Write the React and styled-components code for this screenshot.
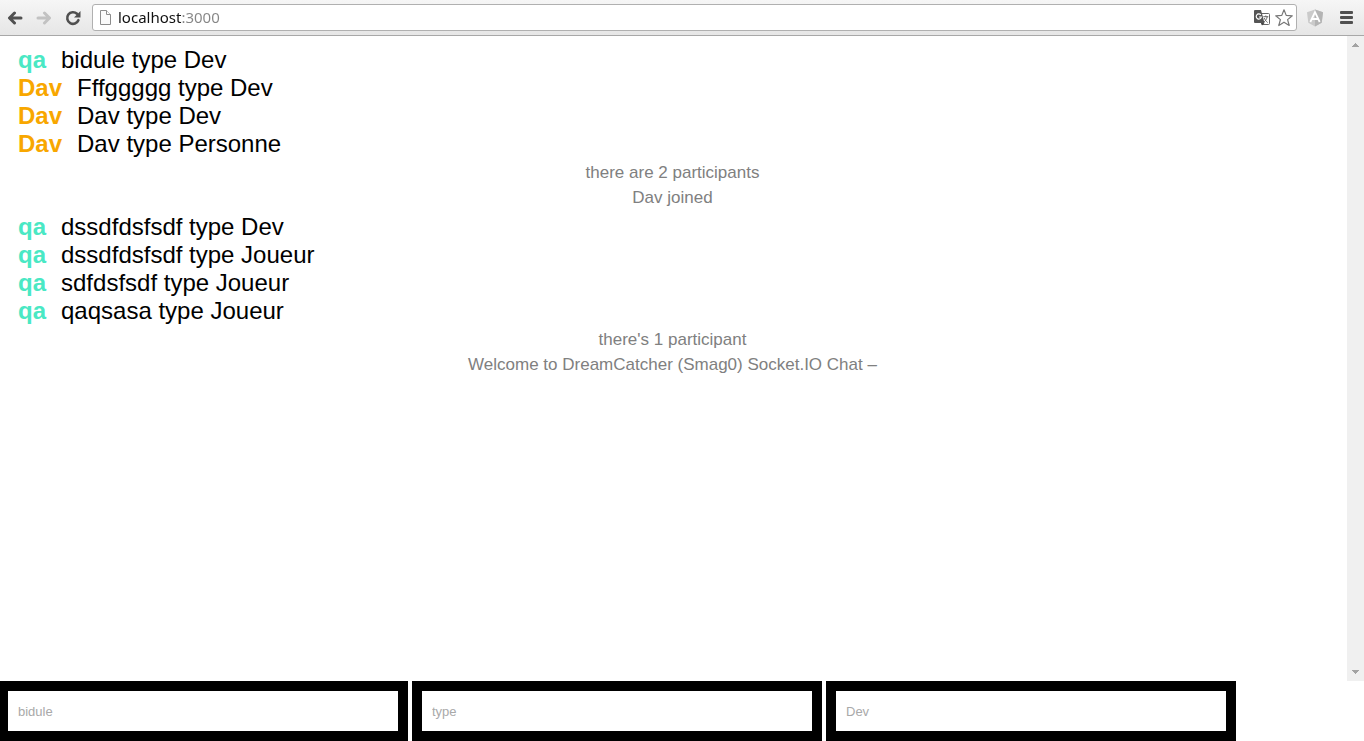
import React from "react";
import styled, { createGlobalStyle } from "styled-components";

const GlobalStyle = createGlobalStyle`
  * { box-sizing: border-box; }
  body {
    margin: 0;
    background: #fff;
    font-family: "Liberation Sans", Arial, sans-serif;
  }
`;

const Window = styled.div`
  display: flex;
  flex-direction: column;
  height: 100vh;
  overflow: hidden;
`;

const Toolbar = styled.header`
  display: flex;
  align-items: center;
  flex: none;
  height: 36px;
  padding: 0 7px 0 5px;
  background: linear-gradient(#f6f6f6, #e6e6e6);
  border-bottom: 1px solid #a8a8a8;
`;

const IconButton = styled.button`
  display: flex;
  align-items: center;
  justify-content: center;
  flex: none;
  width: 20px;
  height: 20px;
  margin-left: ${(p) => p.$gap || 0}px;
  padding: 0;
  border: 0;
  background: none;
  color: ${(p) => (p.disabled ? "#c2c2c2" : "#505050")};

  svg { display: block; }
`;

const AddressBar = styled.label`
  display: flex;
  align-items: center;
  flex: 1;
  min-width: 0;
  height: 27px;
  margin: 0 8px 0 9px;
  padding: 0 2px 0 6px;
  background: #fff;
  border: 1px solid #b0b0b0;
  border-radius: 3px;
`;

const AddressInput = styled.input`
  flex: 1;
  min-width: 0;
  height: 24px;
  margin-left: 6px;
  padding: 0 0 2px;
  border: 0;
  outline: 0;
  font: 15px/22px "Noto Sans", "Open Sans", sans-serif;
  color: transparent;
  caret-color: #000;
  background: linear-gradient(to right, #111 64px, #858585 64px);
  -webkit-background-clip: text;
  background-clip: text;
`;

const Page = styled.main`
  display: flex;
  flex: 1;
  min-height: 0;
`;

const Messages = styled.ul`
  flex: 1;
  min-width: 0;
  margin: 0;
  padding: 10px 20px 10px 18px;
  list-style: none;
  overflow: hidden;
`;

const Message = styled.li`
  font-size: 24px;
  line-height: 28px;
`;

const Username = styled.span`
  display: inline-block;
  padding-right: 15px;
  font-weight: 700;
  color: ${(p) => p.$color};
`;

const Log = styled.li`
  margin: 5px 0;
  font-size: 17px;
  line-height: 20px;
  text-align: center;
  color: #808080;
`;

const ScrollTrack = styled.div`
  display: flex;
  flex-direction: column;
  align-items: center;
  justify-content: space-between;
  flex: none;
  width: 17px;
  padding: 7px 0;
  background: #f0f0f0;
`;

const EntryForm = styled.form`
  display: grid;
  grid-template-columns: repeat(3, 1fr);
  gap: 4px;
  flex: none;
  margin-left: -2px;
  padding-right: 128px;
`;

const EntryInput = styled.input`
  width: 100%;
  min-width: 0;
  height: 60px;
  padding: 0 10px;
  border: 10px solid #000;
  border-radius: 0;
  outline: 0;
  background: #fff;
  font: 13px "Liberation Sans", Arial, sans-serif;

  &::placeholder { color: #a9a9a9; opacity: 1; }
`;

const Arrow = ({ back }) => (
  <svg width="16" height="14" viewBox="0 0 16 14" fill="none" stroke="currentColor" strokeWidth="3" strokeLinecap="round" strokeLinejoin="round">
    <path d={back ? "M14 7H3M7.5 2L2.5 7l5 5" : "M2 7h11M8.5 2l5 5-5 5"} />
  </svg>
);

const Reload = () => (
  <svg width="16" height="16" viewBox="0 0 16 16">
    <path d="M13.4 10.2A5.8 5.8 0 1 1 12 3.8" fill="none" stroke="currentColor" strokeWidth="2.6" strokeLinecap="round" />
    <path d="M15.5 1v6.5H9z" fill="currentColor" />
  </svg>
);

const PageIcon = () => (
  <svg width="13" height="16" viewBox="0 0 13 16" fill="#fafafa" stroke="#8c8c8c">
    <path d="M1.5.5h6l4 4v10h-10z" />
    <path d="M7.5.5v4h4" />
  </svg>
);

const Translate = () => (
  <svg width="16" height="16" viewBox="0 0 16 16">
    <path d="M7 3.5h7.5a1 1 0 0 1 1 1v9a1 1 0 0 1-1 1H8z" fill="#fff" stroke="#666" />
    <path d="M1 0h6l3.5 13H1a1 1 0 0 1-1-1V1a1 1 0 0 1 1-1z" fill="#555" />
    <path d="M7 13h3.5L8 15.5z" fill="#444" />
    <path d="M6.8 4.8A2.6 2.6 0 1 0 7.4 7H5" fill="none" stroke="#fff" strokeWidth="1.2" />
    <path d="M9.3 6.7h5M11.8 5.5v1.2M13.2 6.8c-.5 2.3-1.5 3.8-3 5M10.4 8c.6 2 1.7 3.3 3.2 4.5" fill="none" stroke="#666" />
  </svg>
);

const Star = () => (
  <svg width="18" height="18" viewBox="0 0 18 18">
    <path
      d="M9 .8l2.2 5.6 6.1.4-4.7 3.8 1.6 5.9L9 13.2l-5.2 3.3 1.6-5.9L.7 6.8l6.1-.4z"
      fill="#fff" stroke="#777" strokeWidth="1.2" strokeLinejoin="round"
    />
  </svg>
);

const Shield = () => (
  <svg width="18" height="18" viewBox="0 0 18 18">
    <path d="M9 .5l8 2.8-1.3 10.5L9 17.5l-6.7-3.7L1 3.3z" fill="#cacaca" />
    <path d="M9 .5l8 2.8-1.3 10.5L9 17.5z" fill="#b4b4b4" />
    <path d="M4.3 13L9 3l4.7 10M6.4 10h5.2" fill="none" stroke="#fff" strokeWidth="1.8" />
  </svg>
);

const Menu = () => (
  <svg width="14" height="13" viewBox="0 0 14 13" fill="currentColor">
    <rect width="13" height="3" rx="1" />
    <rect y="5" width="13" height="3" rx="1" />
    <rect y="10" width="13" height="3" rx="1" />
  </svg>
);

const ScrollArrow = ({ up }) => (
  <svg width="7" height="4" viewBox="0 0 7 4" fill="#a3a3a3" shapeRendering="crispEdges">
    <path d={up ? "M3 0h1v1h1v1h1v1h1v1H0V3h1V2h1V1h1z" : "M0 0h7v1H6v1H5v1H4v1H3V3H2V2H1V1H0z"} />
  </svg>
);

const userColors = { qa: "#4ae8c4", Dav: "#f8a700" };

const entries = [
  { user: "qa", text: "bidule type Dev" },
  { user: "Dav", text: "Fffggggg type Dev" },
  { user: "Dav", text: "Dav type Dev" },
  { user: "Dav", text: "Dav type Personne" },
  { text: "there are 2 participants" },
  { text: "Dav joined" },
  { user: "qa", text: "dssdfdsfsdf type Dev" },
  { user: "qa", text: "dssdfdsfsdf type Joueur" },
  { user: "qa", text: "sdfdsfsdf type Joueur" },
  { user: "qa", text: "qaqsasa type Joueur" },
  { text: "there's 1 participant" },
  { text: "Welcome to DreamCatcher (Smag0) Socket.IO Chat –" },
];

export default function App() {
  return (
    <Window>
      <GlobalStyle />
      <Toolbar>
        <IconButton aria-label="Back"><Arrow back /></IconButton>
        <IconButton aria-label="Forward" $gap={9} disabled><Arrow /></IconButton>
        <IconButton aria-label="Reload" $gap={9}><Reload /></IconButton>
        <AddressBar>
          <PageIcon />
          <AddressInput type="text" aria-label="Address" defaultValue="localhost:3000" spellCheck={false} />
          <IconButton aria-label="Translate this page"><Translate /></IconButton>
          <IconButton aria-label="Bookmark this page" $gap={2}><Star /></IconButton>
        </AddressBar>
        <IconButton aria-label="AngularJS extension"><Shield /></IconButton>
        <IconButton aria-label="Menu" $gap={12}><Menu /></IconButton>
      </Toolbar>
      <Page>
        <Messages>
          {entries.map((entry, i) =>
            entry.user ? (
              <Message key={i}>
                <Username $color={userColors[entry.user]}>{entry.user}</Username>
                <span>{entry.text}</span>
              </Message>
            ) : (
              <Log key={i}>{entry.text}</Log>
            )
          )}
        </Messages>
        <ScrollTrack>
          <ScrollArrow up />
          <ScrollArrow />
        </ScrollTrack>
      </Page>
      <EntryForm>
        <EntryInput aria-label="Name" placeholder="bidule" />
        <EntryInput aria-label="Relation" placeholder="type" />
        <EntryInput aria-label="Kind" placeholder="Dev" />
      </EntryForm>
    </Window>
  );
}
